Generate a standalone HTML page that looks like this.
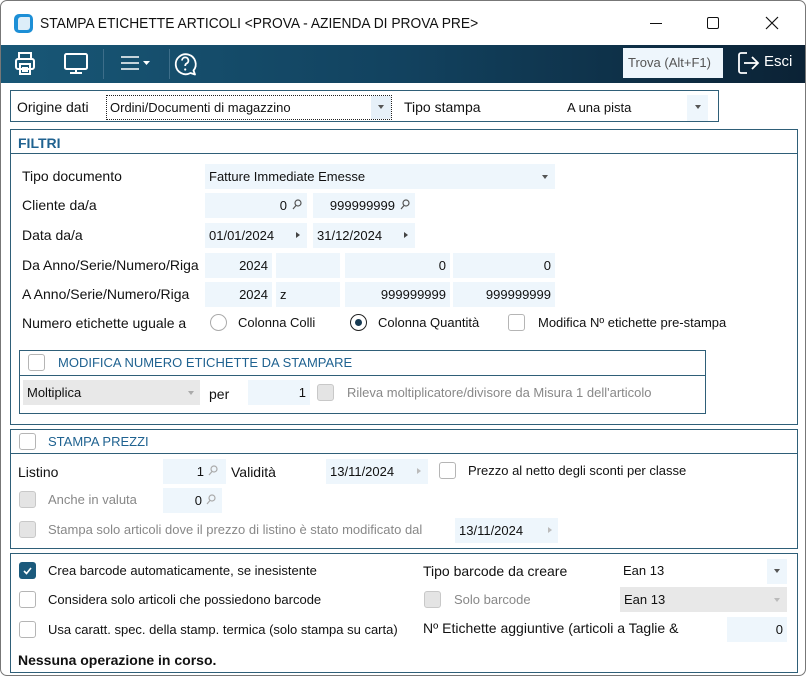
<!DOCTYPE html>
<html><head><meta charset="utf-8"><style>
*{box-sizing:border-box;margin:0;padding:0}
body{width:806px;height:676px;background:#fff;position:relative;overflow:hidden;font-family:"Liberation Sans Narrow","Liberation Sans",sans-serif;font-size:14px;color:#111}
.a{position:absolute;white-space:nowrap}
.t{position:absolute;white-space:nowrap;line-height:16px}
.f{position:absolute;background:#eef6fc;height:25px;font-size:13px;line-height:25px;padding:0 4px;white-space:nowrap}
.r{text-align:right}
.box{position:absolute;border:1px solid #2f5f78}
.cb{position:absolute;width:17px;height:17px;border:1px solid #b5b5b5;border-radius:3px;background:#fff}
.cb.d{background:#e4e4e4;border-color:#c8c8c8}
.rad{position:absolute;width:17px;height:17px;border:1px solid #aaa;border-radius:50%;background:#fff}
.g{color:#888}
.tri{position:absolute;width:0;height:0;border-left:3.5px solid transparent;border-right:3.5px solid transparent;border-top:4px solid #555}
.rt{position:absolute;width:0;height:0;border-top:3.5px solid transparent;border-bottom:3.5px solid transparent;border-left:4px solid #444}
.hd{color:#1f6290;font-size:13px}
.mg{position:absolute}
</style></head><body>
<div class="a" style="left:0;top:0;width:806px;height:676px;border:1px solid #777;border-radius:7px"></div>
<!-- title -->
<div class="a" style="left:14px;top:14px;width:19px;height:19px;background:#1d8fd6;border-radius:5px"></div>
<div class="a" style="left:18px;top:17px;width:12px;height:13px;background:#fff;border-radius:3px 1px 3px 1px;opacity:.85"></div>
<div class="t" style="left:40px;top:15px;font-size:15px;line-height:17px;transform:scaleX(0.92);transform-origin:0 0">STAMPA ETICHETTE ARTICOLI &lt;PROVA - AZIENDA DI PROVA PRE&gt;</div>
<div class="a" style="left:650px;top:23px;width:12px;height:1px;background:#111"></div>
<div class="a" style="left:707px;top:17px;width:12px;height:12px;border:1.3px solid #111;border-radius:2px"></div>
<svg class="a" style="left:765px;top:16px" width="14" height="14" viewBox="0 0 14 14"><path d="M1 1L13 13M13 1L1 13" stroke="#111" stroke-width="1.2"/></svg>
<!-- toolbar -->
<div class="a" style="left:1px;top:45px;width:804px;height:38px;background:linear-gradient(90deg,#185776,#12425f 50%,#0b2235)"></div>
<svg class="a" style="left:14px;top:50px" width="190" height="28" viewBox="0 0 190 28" fill="none" stroke="#fff" stroke-width="2">
<rect x="5" y="3" width="12" height="6"/><rect x="2" y="9" width="18" height="10" rx="2"/><rect x="6" y="14" width="10" height="10"/><line x1="8" y1="18" x2="14" y2="18"/><line x1="8" y1="21" x2="14" y2="21"/>
<rect x="51" y="4" width="22" height="15" rx="1.5"/><line x1="62" y1="19" x2="62" y2="23"/><line x1="56" y1="23" x2="68" y2="23"/>
<line x1="107" y1="7" x2="125" y2="7" stroke-width="1.6"/><line x1="107" y1="13" x2="125" y2="13" stroke-width="1.6"/><line x1="107" y1="19" x2="125" y2="19" stroke-width="1.6"/>
<path d="M129 11h7l-3.5 4z" fill="#fff" stroke="none"/>
<path d="M181 24.5 L179.5 20.5 A10 10 0 1 0 176.5 23 Z" stroke-width="1.8" stroke-linejoin="round"/>
<path d="M168 10.5a3.2 3.2 0 1 1 4.5 3c-1 .5-1.3 1.2-1.3 2.5" stroke-width="1.8"/><circle cx="171.2" cy="19.5" r="1.1" fill="#fff" stroke="none"/>
</svg>
<div class="a" style="left:103px;top:49px;width:1px;height:30px;background:#3d6e8a"></div>
<div class="a" style="left:169px;top:49px;width:1px;height:30px;background:#3d6e8a"></div>
<div class="a" style="left:623px;top:48px;width:100px;height:30px;background:#eef6fc;color:#555;font-size:13px;line-height:30px;padding-left:5px">Trova (Alt+F1)</div>
<svg class="a" style="left:737px;top:51px" width="24" height="24" viewBox="0 0 24 24" fill="none" stroke="#fff" stroke-width="1.8"><path d="M10 2H4a2 2 0 0 0-2 2v16a2 2 0 0 0 2 2h6"/><line x1="7" y1="12" x2="21" y2="12"/><path d="M15 6l6 6-6 6"/></svg>
<div class="t" style="left:764px;top:54px;color:#fff;font-size:15px">Esci</div>
<!-- origine -->
<div class="box" style="left:10px;top:90px;width:709px;height:32px"></div>
<div class="t" style="left:17px;top:99px">Origine dati</div>
<div class="a" style="left:106px;top:95px;width:286px;height:25px;border:1px dotted #222;background:#fff;font-size:13px;line-height:23px;padding-left:3px">Ordini/Documenti di magazzino</div>
<div class="a" style="left:371px;top:96px;width:20px;height:23px;background:#e6f0f8"></div>
<div class="tri" style="left:378px;top:105px"></div>
<div class="t" style="left:404px;top:99px">Tipo stampa</div>
<div class="t" style="left:567px;top:100px;font-size:13px">A una pista</div>
<div class="a" style="left:687px;top:95px;width:21px;height:26px;background:#eef6fc"></div>
<div class="tri" style="left:695px;top:105px"></div>
<!-- filtri -->
<div class="box" style="left:10px;top:129px;width:788px;height:296px"></div>
<div class="a" style="left:10px;top:153px;width:788px;height:1px;background:#2f5f78"></div>
<div class="t" style="left:18px;top:135px;font-weight:bold;color:#1f6290;font-family:'Liberation Sans',sans-serif;font-size:14px">FILTRI</div>
<div class="t" style="left:22px;top:168px">Tipo documento</div>
<div class="f" style="left:205px;top:164px;width:350px">Fatture Immediate Emesse</div><div class="tri" style="left:542px;top:175px"></div>
<div class="t" style="left:22px;top:197px">Cliente da/a</div>
<div class="f r" style="left:205px;top:193px;width:102px;padding-right:20px">0</div>
<div class="f r" style="left:313px;top:193px;width:102px;padding-right:20px">999999999</div>
<div class="t" style="left:22px;top:227px">Data da/a</div>
<div class="f" style="left:205px;top:223px;width:102px">01/01/2024</div><div class="rt" style="left:296px;top:232px"></div>
<div class="f" style="left:313px;top:223px;width:102px">31/12/2024</div><div class="rt" style="left:404px;top:232px"></div>
<div class="t" style="left:22px;top:257px">Da Anno/Serie/Numero/Riga</div>
<div class="f r" style="left:205px;top:253px;width:67px">2024</div>
<div class="f" style="left:276px;top:253px;width:64px"></div>
<div class="f r" style="left:345px;top:253px;width:105px">0</div>
<div class="f r" style="left:453px;top:253px;width:102px">0</div>
<div class="t" style="left:22px;top:286px">A Anno/Serie/Numero/Riga</div>
<div class="f r" style="left:205px;top:282px;width:67px">2024</div>
<div class="f" style="left:276px;top:282px;width:64px">z</div>
<div class="f r" style="left:345px;top:282px;width:105px">999999999</div>
<div class="f r" style="left:453px;top:282px;width:102px">999999999</div>
<div class="t" style="left:22px;top:315px">Numero etichette uguale a</div>
<div class="rad" style="left:210px;top:314px"></div><div class="t" style="left:238px;top:315px;font-size:13px">Colonna Colli</div>
<div class="rad" style="left:350px;top:314px;border-color:#222"></div><div class="a" style="left:355px;top:319px;width:7px;height:7px;border-radius:50%;background:#173a52"></div><div class="t" style="left:378px;top:315px;font-size:13px">Colonna Quantità</div>
<div class="cb" style="left:508px;top:314px"></div><div class="t" style="left:538px;top:315px;font-size:13px">Modifica Nº etichette pre-stampa</div>
<div class="box" style="left:19px;top:350px;width:687px;height:64px"></div>
<div class="a" style="left:19px;top:375px;width:687px;height:1px;background:#2f5f78"></div>
<div class="cb" style="left:28px;top:354px"></div>
<div class="t hd" style="left:58px;top:355px">MODIFICA NUMERO ETICHETTE DA STAMPARE</div>
<div class="f" style="left:23px;top:380px;width:177px;height:25px;background:#e8e8e8">Moltiplica</div><div class="tri" style="left:188px;top:391px;border-top-color:#aaa"></div>
<div class="t" style="left:209px;top:386px">per</div>
<div class="f r" style="left:248px;top:380px;width:62px">1</div>
<div class="cb d" style="left:317px;top:384px"></div>
<div class="t g" style="left:347px;top:385px;font-size:13px">Rileva moltiplicatore/divisore da Misura 1 dell'articolo</div>
<!-- prezzi -->
<div class="box" style="left:10px;top:429px;width:788px;height:120px"></div>
<div class="a" style="left:10px;top:453px;width:788px;height:1px;background:#2f5f78"></div>
<div class="cb" style="left:19px;top:433px"></div>
<div class="t hd" style="left:48px;top:434px">STAMPA PREZZI</div>
<div class="t" style="left:18px;top:464px">Listino</div>
<div class="f r" style="left:163px;top:459px;width:63px;padding-right:22px">1</div>
<div class="t" style="left:231px;top:464px">Validità</div>
<div class="f" style="left:326px;top:459px;width:102px">13/11/2024</div><div class="rt" style="left:417px;top:468px;border-left-color:#bbb"></div>
<div class="cb" style="left:439px;top:462px"></div>
<div class="t" style="left:468px;top:463px;font-size:13px">Prezzo al netto degli sconti per classe</div>
<div class="cb d" style="left:19px;top:491px"></div>
<div class="t g" style="left:48px;top:492px;font-size:13px">Anche in valuta</div>
<div class="f r" style="left:163px;top:488px;width:59px;padding-right:20px">0</div>
<div class="cb d" style="left:19px;top:521px"></div>
<div class="t g" style="left:48px;top:522px;font-size:13px">Stampa solo articoli dove il prezzo di listino è stato modificato dal</div>
<div class="f" style="left:455px;top:518px;width:103px">13/11/2024</div><div class="rt" style="left:548px;top:527px;border-left-color:#bbb"></div>
<!-- magnifiers -->
<svg class="mg" style="left:292px;top:199px" width="10" height="11" viewBox="0 0 10 11" fill="none" stroke="#555" stroke-width="1.2"><circle cx="6" cy="4" r="3"/><line x1="4" y1="6.5" x2="1" y2="10"/></svg>
<svg class="mg" style="left:400px;top:199px" width="10" height="11" viewBox="0 0 10 11" fill="none" stroke="#555" stroke-width="1.2"><circle cx="6" cy="4" r="3"/><line x1="4" y1="6.5" x2="1" y2="10"/></svg>
<svg class="mg" style="left:208px;top:465px" width="10" height="11" viewBox="0 0 10 11" fill="none" stroke="#aaa" stroke-width="1.2"><circle cx="6" cy="4" r="3"/><line x1="4" y1="6.5" x2="1" y2="10"/></svg>
<svg class="mg" style="left:206px;top:494px" width="10" height="11" viewBox="0 0 10 11" fill="none" stroke="#aaa" stroke-width="1.2"><circle cx="6" cy="4" r="3"/><line x1="4" y1="6.5" x2="1" y2="10"/></svg>
<!-- bottom -->
<div class="box" style="left:10px;top:553px;width:788px;height:120px"></div>
<div class="a" style="left:19px;top:562px;width:17px;height:17px;border-radius:3px;background:#1b5a7c"></div>
<svg class="a" style="left:21px;top:564px" width="13" height="13" viewBox="0 0 13 13"><path d="M3 7l2.5 2.5L10 4" stroke="#fff" stroke-width="1.6" fill="none"/></svg>
<div class="t" style="left:48px;top:563px;font-size:13px">Crea barcode automaticamente, se inesistente</div>
<div class="t" style="left:423px;top:563px">Tipo barcode da creare</div>
<div class="t" style="left:623px;top:563px;font-size:13px">Ean 13</div>
<div class="a" style="left:767px;top:559px;width:20px;height:25px;background:#eef6fc"></div><div class="tri" style="left:774px;top:569px"></div>
<div class="cb" style="left:19px;top:591px"></div>
<div class="t" style="left:48px;top:592px;font-size:13px">Considera solo articoli che possiedono barcode</div>
<div class="cb d" style="left:424px;top:591px"></div>
<div class="t g" style="left:454px;top:592px;font-size:13px">Solo barcode</div>
<div class="f" style="left:620px;top:587px;width:167px;background:#e8e8e8">Ean 13</div><div class="tri" style="left:774px;top:598px;border-top-color:#bbb"></div>
<div class="cb" style="left:19px;top:621px"></div>
<div class="t" style="left:48px;top:622px;font-size:13px">Usa caratt. spec. della stamp. termica (solo stampa su carta)</div>
<div class="t" style="left:423px;top:620px">Nº Etichette aggiuntive (articoli a Taglie &amp;</div>
<div class="f r" style="left:727px;top:617px;width:60px">0</div>
<div class="t" style="left:18px;top:652px;font-weight:bold">Nessuna operazione in corso.</div>
</body></html>
